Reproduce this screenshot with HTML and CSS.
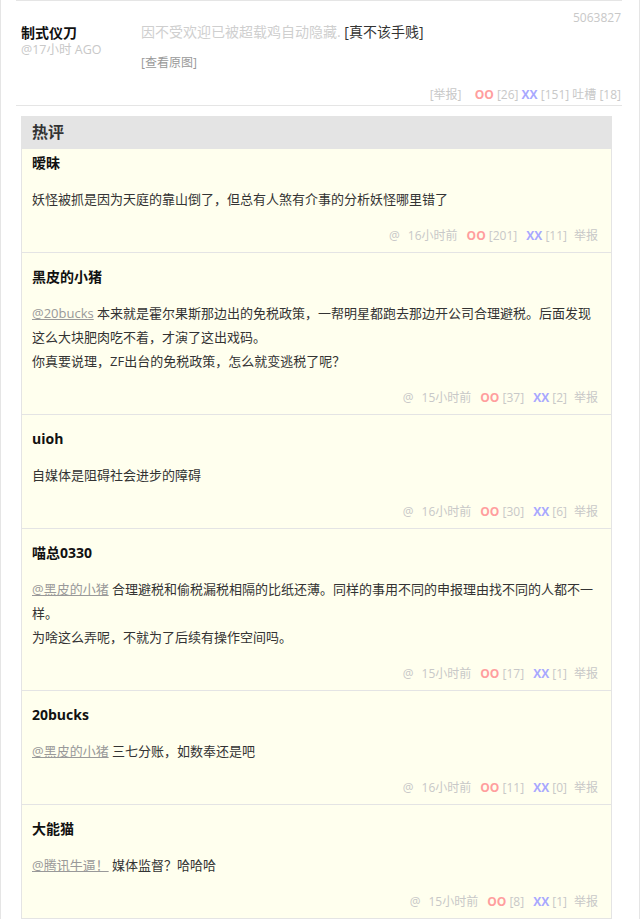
FILE: index.html
```html
<!DOCTYPE html>
<html lang="zh-CN">
<head>
<meta charset="utf-8">
<title>热评</title>
<link rel="stylesheet" href="styles.css">
</head>
<body>
<div class="page">
  <div class="post">
    <span class="post-id">5063827</span>
    <div class="post-main">
      <div class="author">
        <strong class="author-name">制式仪刀</strong>
        <span class="author-time">@17小时 AGO</span>
      </div>
      <div class="post-text">
        <p class="hidden-note"><span class="note-muted">因不受欢迎已被超载鸡自动隐藏.</span> <span class="reveal">[真不该手贱]</span></p>
        <span class="view-orig">[查看原图]</span>
      </div>
    </div>
    <div class="post-foot">
      <span class="report">[举报]</span>
      <span class="vote"><b class="oo">OO</b> [26]</span>
      <span class="vote-plain"><b class="xx">XX</b> [151]</span>
      <span class="vote-plain">吐槽 [18]</span>
    </div>
  </div>

  <div class="hot">
    <h3 class="hot-title">热评</h3>

    <div class="hot-item hot-item-first">
      <div class="hot-name">暧昧</div>
      <div class="hot-text">妖怪被抓是因为天庭的靠山倒了，但总有人煞有介事的分析妖怪哪里错了</div>
      <div class="hot-foot"><span>@</span><span class="f-time">16小时前</span><span class="f-group"><b class="oo">OO</b> [201]</span><span class="f-group"><b class="xx">XX</b> [11]</span><span class="f-report">举报</span></div>
    </div>

    <div class="hot-item">
      <div class="hot-name">黑皮的小猪</div>
      <div class="hot-text"><span class="mention">@20bucks</span> 本来就是霍尔果斯那边出的免税政策，一帮明星都跑去那边开公司合理避税。后面发现这么大块肥肉吃不着，才演了这出戏码。<br>你真要说理，ZF出台的免税政策，怎么就变逃税了呢？</div>
      <div class="hot-foot"><span>@</span><span class="f-time">15小时前</span><span class="f-group"><b class="oo">OO</b> [37]</span><span class="f-group"><b class="xx">XX</b> [2]</span><span class="f-report">举报</span></div>
    </div>

    <div class="hot-item">
      <div class="hot-name">uioh</div>
      <div class="hot-text">自媒体是阻碍社会进步的障碍</div>
      <div class="hot-foot"><span>@</span><span class="f-time">16小时前</span><span class="f-group"><b class="oo">OO</b> [30]</span><span class="f-group"><b class="xx">XX</b> [6]</span><span class="f-report">举报</span></div>
    </div>

    <div class="hot-item">
      <div class="hot-name">喵总0330</div>
      <div class="hot-text"><span class="mention">@黑皮的小猪</span> 合理避税和偷税漏税相隔的比纸还薄。同样的事用不同的申报理由找不同的人都不一样。<br>为啥这么弄呢，不就为了后续有操作空间吗。</div>
      <div class="hot-foot"><span>@</span><span class="f-time">15小时前</span><span class="f-group"><b class="oo">OO</b> [17]</span><span class="f-group"><b class="xx">XX</b> [1]</span><span class="f-report">举报</span></div>
    </div>

    <div class="hot-item">
      <div class="hot-name">20bucks</div>
      <div class="hot-text"><span class="mention">@黑皮的小猪</span> 三七分账，如数奉还是吧</div>
      <div class="hot-foot"><span>@</span><span class="f-time">16小时前</span><span class="f-group"><b class="oo">OO</b> [11]</span><span class="f-group"><b class="xx">XX</b> [0]</span><span class="f-report">举报</span></div>
    </div>

    <div class="hot-item">
      <div class="hot-name">大能猫</div>
      <div class="hot-text"><span class="mention">@腾讯牛逼！</span> 媒体监督？哈哈哈</div>
      <div class="hot-foot"><span>@</span><span class="f-time">15小时前</span><span class="f-group"><b class="oo">OO</b> [8]</span><span class="f-group"><b class="xx">XX</b> [1]</span><span class="f-report">举报</span></div>
    </div>
  </div>
</div>
</body>
</html>
```

FILE: styles.css
```css
* {
  box-sizing: border-box;
}

html, body {
  margin: 0;
  padding: 0;
  background: #fff;
}

body {
  font-family: "Open Sans", "Noto Sans CJK SC", sans-serif;
  color: #333;
  font-size: 13px;
}

.page {
  width: 640px;
  min-height: 100vh;
  border-left: 1px solid #e5e5e5;
  border-right: 1px solid #e5e5e5;
  padding-top: 0;
}

/* ---------- post ---------- */
.post {
  position: relative;
  margin-left: 15px;
  width: 606px;
  border-top: 1px solid #e5e5e5;
  border-bottom: 1px solid #e5e5e5;
  padding: 22px 1px 0 5px;
}

.post-id {
  position: absolute;
  top: 9px;
  right: 1px;
  font-size: 12px;
  line-height: 16px;
  color: #c8c8c8;
}

.post-main {
  display: grid;
  grid-template-columns: 120px 1fr;
}

.author {
  display: flex;
  flex-direction: column;
}

.author-name {
  font-size: 14px;
  line-height: 20px;
  font-weight: bold;
  color: #111;
}

.author-time {
  font-size: 12.5px;
  line-height: 14px;
  color: #c8c8c8;
}

.post-text {
  display: flex;
  flex-direction: column;
  align-items: flex-start;
}

.hidden-note {
  margin: 0;
  font-size: 14px;
  line-height: 18px;
}

.note-muted {
  color: #cfcfcf;
}

.reveal {
  color: #333;
}

.view-orig {
  margin-top: 14px;
  font-size: 12px;
  line-height: 16px;
  color: #999;
}

.post-foot {
  margin-top: 14px;
  font-size: 12px;
  line-height: 20px;
  color: #c8c8c8;
  text-align: right;
}

.post-foot .report {
  margin-right: 10px;
}

.oo {
  color: #ff9e9e;
  font-weight: bold;
}

.xx {
  color: #a8a8ff;
  font-weight: bold;
}

/* ---------- hot comments ---------- */
.hot {
  margin: 10px 0 0 20px;
  width: 591px;
  border: 1px solid #e4e4e4;
  background: #ffffee;
}

.hot-title {
  margin: 0;
  background: #e4e4e4;
  height: 32px;
  padding: 0 10px;
  font-size: 16px;
  line-height: 30px;
  font-weight: bold;
  color: #333;
}

.hot-item {
  border-top: 1px solid #e4e4e4;
  padding: 14px 13px 6px 10px;
}

.hot-item-first {
  border-top: none;
  padding-top: 4px;
}

.hot-name {
  font-size: 14px;
  line-height: 20px;
  font-weight: bold;
  color: #111;
}

.hot-text {
  margin-top: 14px;
  font-size: 13px;
  line-height: 24px;
  color: #333;
}

.mention {
  color: #999;
  text-decoration: underline;
}

.hot-foot {
  margin-top: 15px;
  font-size: 12px;
  line-height: 20px;
  color: #c8c8c8;
  text-align: right;
}

.f-time {
  margin-left: 8px;
}

.f-group {
  margin-left: 9px;
}

.f-report {
  margin-left: 7px;
}
```
